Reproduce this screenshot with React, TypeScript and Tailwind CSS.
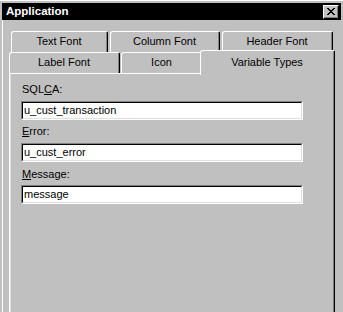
import React from 'react';

const closePixels = [
  [0, 0], [1, 0], [6, 0], [7, 0],
  [1, 1], [2, 1], [5, 1], [6, 1],
  [2, 2], [3, 2], [4, 2], [5, 2],
  [3, 3], [4, 3],
  [2, 4], [3, 4], [4, 4], [5, 4],
  [1, 5], [2, 5], [5, 5], [6, 5],
  [0, 6], [1, 6], [6, 6], [7, 6]
];

const CloseButton = () => (
  <div className="w-[16px] h-[14px] bg-[#c0c0c0] border-t border-l border-white border-r border-b border-r-black border-b-black">
    <div className="w-full h-full border-r border-b border-[#808080] flex items-center justify-center">
      <svg width="8" height="7" viewBox="0 0 8 7" shapeRendering="crispEdges">
        {closePixels.map(([x, y]) => (
          <rect key={`${x}-${y}`} x={x} y={y} width="1" height="1" fill="#000" />
        ))}
      </svg>
    </div>
  </div>
);

const BackTab = ({ label, className }: { label: string; className: string }) => (
  <div
    className={`${className} h-[21px] border-t border-l border-white border-r border-r-black rounded-tl-[3px] rounded-tr-[2px]`}
  >
    <div className="h-full border-r border-[#808080] flex items-center justify-center pb-[1px]">
      {label}
    </div>
  </div>
);

const Field = ({
  label,
  mnemonic,
  value,
  className
}: {
  label: string;
  mnemonic: number;
  value: string;
  className: string;
}) => (
  <div className={className}>
    <div className="h-[13px] leading-[13px] pl-[1px]">
      {label.slice(0, mnemonic)}
      <span className="underline underline-offset-[1px]">{label[mnemonic]}</span>
      {label.slice(mnemonic + 1)}
    </div>
    <div className="w-[282px] h-[19px] border-t border-l border-[#808080] border-r border-b border-r-white border-b-white">
      <div className="h-full bg-white border-t border-l border-black border-r border-b border-r-[#dfdfdf] border-b-[#dfdfdf] flex items-center pl-[1px]">
        {value}
      </div>
    </div>
  </div>
);

export default function App() {
  return (
    <div className="w-[343px] h-[312px] bg-[#c0c0c0] overflow-hidden pt-[3px] pl-[2px] text-[11px] text-black font-['Liberation_Sans',Arial,sans-serif] border-t border-white">
      <div className="w-[339px] h-[17px] bg-black flex items-center justify-between pl-[4px] pr-[2px] -mt-[1px]">
        <span className="text-white font-bold text-[11.5px] leading-none">Application</span>
        <CloseButton />
      </div>

      <div className="h-full border-l border-white pl-[6px] pt-[11px]">
        <div className="flex pl-[2px] gap-[2px]">
          <BackTab label="Text Font" className="w-[97px]" />
          <BackTab label="Column Font" className="w-[110px]" />
          <BackTab label="Header Font" className="w-[111px]" />
        </div>

        <div className="flex h-[21px] items-start">
          <BackTab label="Label Font" className="w-[111px]" />
          <div className="w-[1px]" />
          <BackTab label="Icon" className="w-[82px]" />
          <div className="relative z-10 -ml-[3px] -mt-[2px] w-[135px] h-[25px] bg-[#c0c0c0] border-t border-l border-white border-r border-r-black rounded-tl-[3px] rounded-tr-[2px]">
            <div className="h-full border-r border-[#808080] flex justify-center pt-[3px]">
              Variable Types
            </div>
          </div>
        </div>

        <div className="w-[326px] h-[260px] border-t border-l border-white border-r border-r-black">
          <div className="h-full border-l border-[#dfdfdf] border-r border-r-[#808080] pl-[10px] pt-[9px]">
            <Field label="SQLCA:" mnemonic={3} value="u_cust_transaction" className="flex flex-col gap-[5px]" />
            <Field label="Error:" mnemonic={0} value="u_cust_error" className="flex flex-col gap-[5px] mt-[5px]" />
            <Field label="Message:" mnemonic={0} value="message" className="flex flex-col gap-[4px] mt-[6px]" />
          </div>
        </div>
      </div>
    </div>
  );
}
